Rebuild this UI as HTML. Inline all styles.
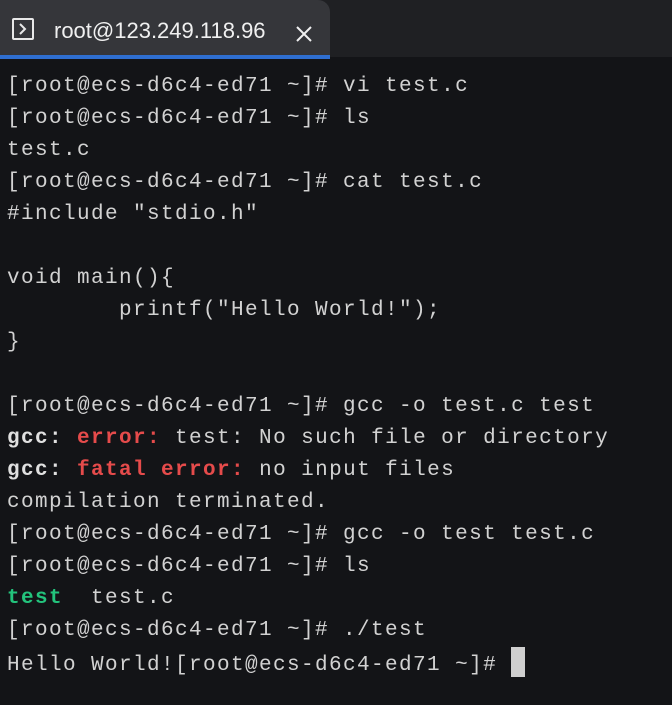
<!DOCTYPE html>
<html><head><meta charset="utf-8"><style>
html,body{margin:0;padding:0;width:672px;height:705px;overflow:hidden;background:#131417;}
.bar{position:absolute;left:0;top:0;width:672px;height:57px;background:#1f2023;}
.tab{position:absolute;left:0;top:0;width:330px;height:55px;background:#35363a;border-top-right-radius:12px;}
.blue{position:absolute;left:0;top:55px;width:330px;height:4px;background:#2f6fd1;}
.icon{position:absolute;left:12px;top:18px;width:22px;height:22px;box-sizing:border-box;border:2px solid #e8e8e8;border-radius:2px;}
.title{position:absolute;left:54px;top:18px;font:22px "Liberation Sans",sans-serif;color:#f0f0f0;}
.term{position:absolute;left:7px;top:71px;font-family:"Liberation Mono",monospace;font-size:21px;letter-spacing:1.4px;line-height:32px;color:#d2d2d2;white-space:pre;}
.r{color:#e54b4b;font-weight:bold}.b{font-weight:bold;color:#e0e0e0}.g{color:#23c37c;font-weight:bold}
.cur{display:inline-block;width:14px;height:30px;background:#cfcfcf;vertical-align:-7px;}
</style></head><body>
<div class="bar"></div><div class="tab"></div><div class="blue"></div>
<div class="icon"><svg width="18" height="18" viewBox="0 0 18 18" style="position:absolute;left:0;top:0"><path d="M6 4 L11 9 L6 14" stroke="#e8e8e8" stroke-width="2" fill="none"/></svg></div>
<div class="title">root@123.249.118.96</div>
<svg style="position:absolute;left:295px;top:25px" width="18" height="18" viewBox="0 0 18 18"><path d="M2 2L16 16M16 2L2 16" stroke="#f0f0f0" stroke-width="2"/></svg>
<div class="term">[root@ecs-d6c4-ed71 ~]# vi test.c
[root@ecs-d6c4-ed71 ~]# ls
test.c
[root@ecs-d6c4-ed71 ~]# cat test.c
#include "stdio.h"

void main(){
        printf("Hello World!");
}

[root@ecs-d6c4-ed71 ~]# gcc -o test.c test
<span class="b">gcc:</span> <span class="r">error:</span> test: No such file or directory
<span class="b">gcc:</span> <span class="r">fatal error:</span> no input files
compilation terminated.
[root@ecs-d6c4-ed71 ~]# gcc -o test test.c
[root@ecs-d6c4-ed71 ~]# ls
<span class="g">test</span>  test.c
[root@ecs-d6c4-ed71 ~]# ./test
Hello World![root@ecs-d6c4-ed71 ~]# <span class="cur"></span></div>
</body></html>
